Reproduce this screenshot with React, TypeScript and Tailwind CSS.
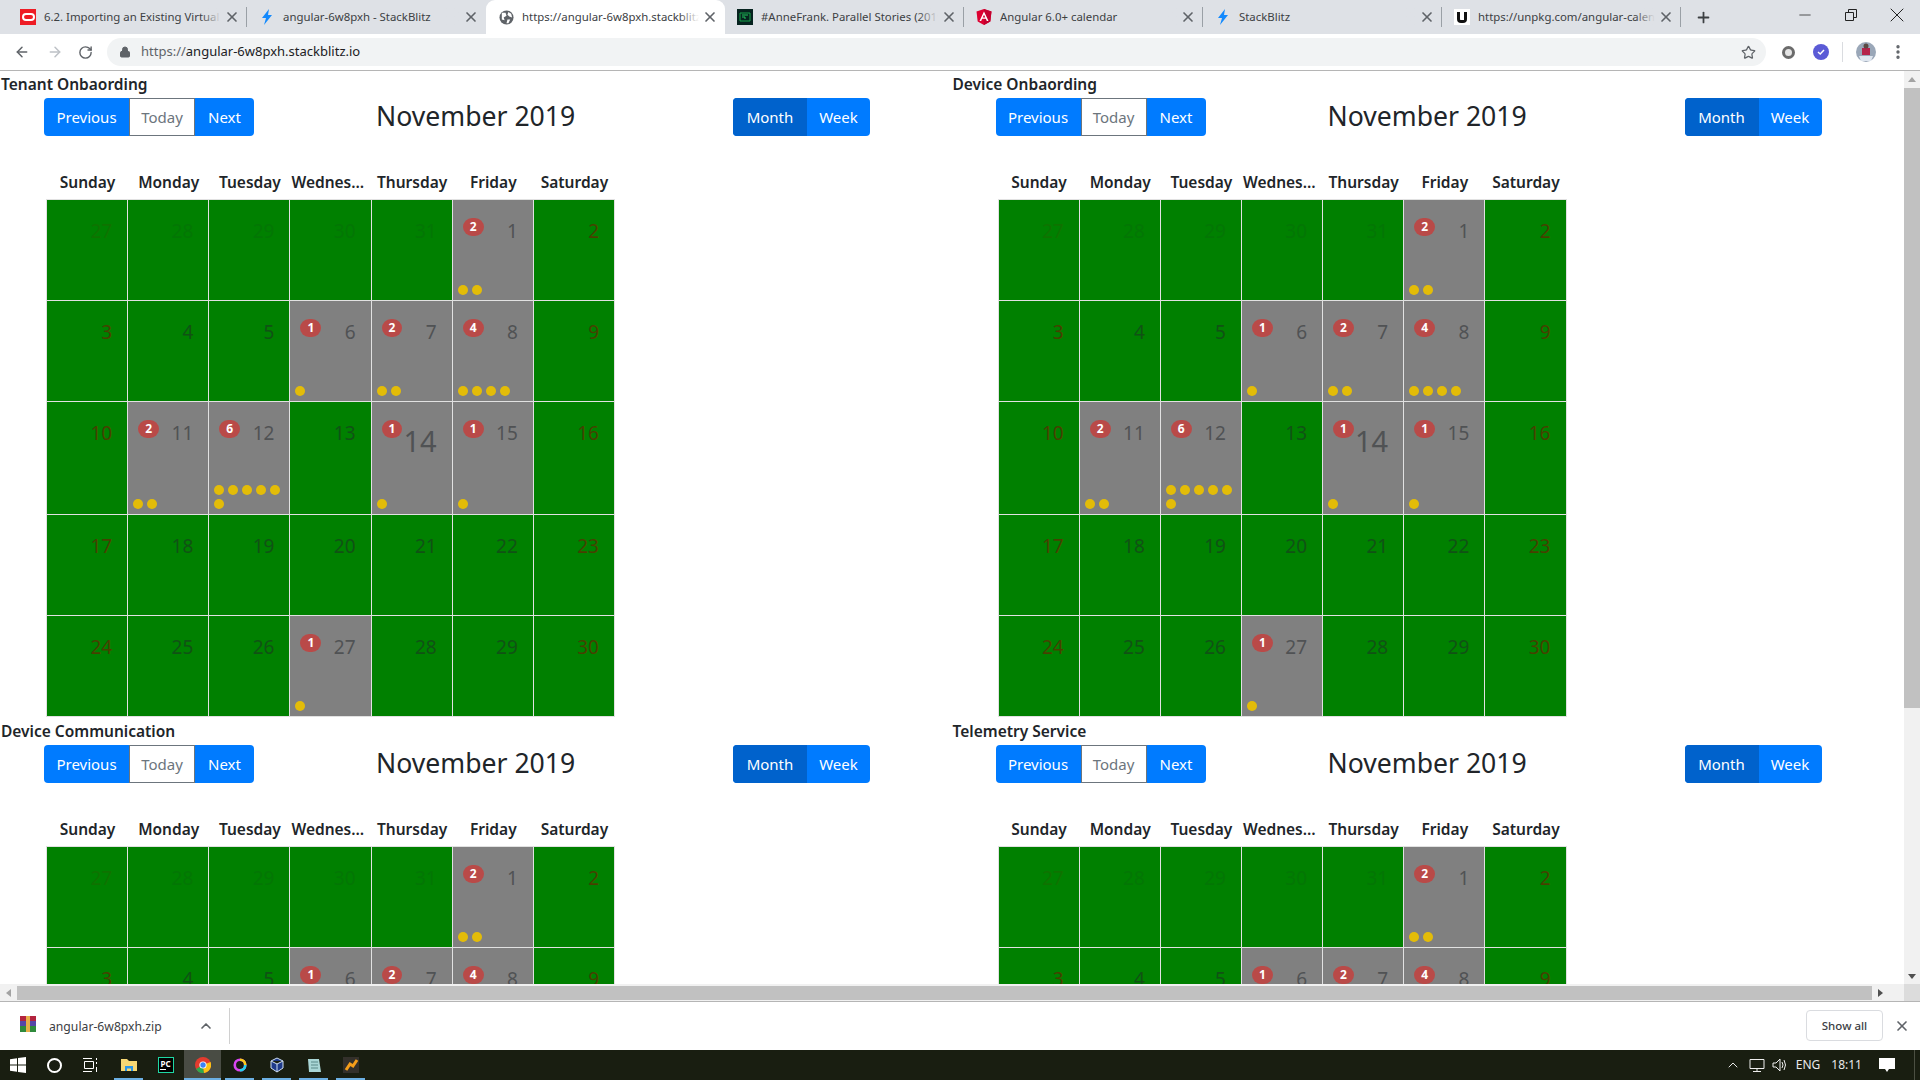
import { ArrowLeft, ArrowRight, ChevronUp, EllipsisVertical, Lock, Minus, Plus, RotateCw, Star, X } from "lucide-react";

const uiFont = "font-['Noto_Sans','Open_Sans',sans-serif]";

// 이벤트 개수 (날짜별)
const events: Record<number, number> = { 1: 2, 6: 1, 7: 2, 8: 4, 11: 2, 12: 6, 14: 1, 15: 1, 27: 1 };
const days = [27, 28, 29, 30, 31, ...Array.from({ length: 30 }, (_, i) => i + 1)];
const weekdays = ["Sunday", "Monday", "Tuesday", "Wednesday", "Thursday", "Friday", "Saturday"];

function Bolt() {
  return (
    <svg viewBox="0 0 16 16" className="size-4">
      <path d="M10 0 L3 9 H7 L5 16 L13 6 H9 Z" fill="#1389fd" />
    </svg>
  );
}

function OracleIcon() {
  return (
    <div className="flex size-4 items-center justify-center bg-[#ee1c25]">
      <div className="h-[8px] w-[13px] rounded-full border-2 border-white" />
    </div>
  );
}

function GlobeIcon() {
  return (
    <svg viewBox="0 0 16 16" className="size-[15px]">
      <circle cx="8" cy="8" r="7.5" fill="#5f6368" />
      <path d="M3 3 L7 3 L8 6 L5 8 L6 11 L3 10 Z M10 2 L13 4 L14 8 L11 7 L9 5 Z M9 10 L12 10 L10 14 L8 14 Z" fill="#fff" />
    </svg>
  );
}

function AnneIcon() {
  return (
    <div className="flex size-4 items-center justify-center bg-[#06231f]">
      <svg viewBox="0 0 16 16" className="size-4">
        <path d="M3 4 H13 V12 H3 Z" fill="none" stroke="#16a34a" strokeWidth="1" />
        <path d="M5 6 H11 M5 8 H8 V10" fill="none" stroke="#22c55e" strokeWidth="1" />
      </svg>
    </div>
  );
}

function AngularIcon() {
  return (
    <svg viewBox="0 0 16 16" className="size-4">
      <path d="M8 0 L15.5 2.6 L14.3 12.6 L8 16 L1.7 12.6 L0.5 2.6 Z" fill="#dd0031" />
      <path d="M8 0 L15.5 2.6 L14.3 12.6 L8 16 Z" fill="#c3002f" />
      <path d="M8 2.5 L3.5 12 H5.2 L6.1 9.8 H9.9 L10.8 12 H12.5 Z M8 5.8 L9.3 8.5 H6.7 Z" fill="#fff" />
    </svg>
  );
}

function UnpkgIcon() {
  return (
    <div className="flex size-4 items-center justify-center bg-white">
      <div className="h-[11px] w-[10px] rounded-b-[4px] border-x-[3px] border-b-[3px] border-[#111]" />
    </div>
  );
}

function Tab({ icon, title, active, noDivider }: { icon: React.ReactNode; title: string; active?: boolean; noDivider?: boolean }) {
  const fade = active ? "from-white" : "from-[#dee1e6]";
  return (
    <div className={`relative flex h-[34px] w-[239px] shrink-0 items-center pl-3 pr-[7px] ${active ? "rounded-t-[9px] bg-white" : ""}`}>
      <div className="flex w-4 shrink-0 items-center justify-center">{icon}</div>
      <div className="relative ml-2 min-w-0 flex-1 overflow-hidden whitespace-nowrap text-[11.4px] text-[#3c4043]">
        {title}
        <div className={`absolute inset-y-0 right-0 w-5 bg-linear-to-l ${fade} to-transparent`} />
      </div>
      <X className="ml-[3px] size-[16px] shrink-0 text-[#5f6368]" strokeWidth={2.5} />
      {!noDivider && <div className="absolute right-0 h-5 w-px bg-[#9aa0a6]" />}
    </div>
  );
}

function TabBar() {
  return (
    <div className="flex h-[34px] items-center bg-[#dee1e6] pl-2">
      <Tab icon={<OracleIcon />} title="6.2. Importing an Existing Virtual Machine" />
      <Tab icon={<Bolt />} title="angular-6w8pxh - StackBlitz" noDivider />
      <Tab icon={<GlobeIcon />} title="https://angular-6w8pxh.stackblitz.io" active noDivider />
      <Tab icon={<AnneIcon />} title="#AnneFrank. Parallel Stories (2019)" />
      <Tab icon={<AngularIcon />} title="Angular 6.0+ calendar" />
      <Tab icon={<Bolt />} title="StackBlitz" />
      <Tab icon={<UnpkgIcon />} title="https://unpkg.com/angular-calendar" />
      <Plus className="ml-[14px] size-[17px] text-[#3c4043]" strokeWidth={2.5} />
      <div className="ml-auto flex items-center self-start pt-[3px] text-[#222]">
        <Minus className="mr-[31px] size-[18px]" strokeWidth={1} />
        <svg viewBox="0 0 12 12" className="mr-[28px] size-[12px]" fill="none" stroke="currentColor">
          <path d="M0.5 3.5 H8.5 V11.5 H0.5 Z M3.5 3.5 V0.5 H11.5 V8.5 H8.5" />
        </svg>
        <X className="mr-[11px] size-[24px]" strokeWidth={1} />
      </div>
    </div>
  );
}

function Toolbar() {
  return (
    <div className="flex h-[37px] items-center border-b border-[#b5b5b5] bg-white">
      <ArrowLeft className="ml-[14px] size-[16px] text-[#5f6368]" strokeWidth={2.25} />
      <ArrowRight className="ml-[17px] size-[16px] text-[#bdc1c6]" strokeWidth={2.25} />
      <RotateCw className="ml-[15px] size-[15px] text-[#5f6368]" strokeWidth={2.25} />
      <div className="ml-[14px] flex h-[28px] w-[1659px] items-center rounded-full bg-[#f1f3f4] pl-3 pr-[10px]">
        <Lock className="size-[12px] fill-[#5f6368] text-[#5f6368]" />
        <div className="ml-[10px] text-[13px]">
          <span className="text-[#5f6368]">https://</span>
          <span className="text-[#202124]">angular-6w8pxh.stackblitz.io</span>
        </div>
        <Star className="ml-auto size-[15px] text-[#5f6368]" strokeWidth={2} />
      </div>
      <div className="ml-[16px] size-[13px] rounded-full border-[3px] border-[#6b6b6b] bg-[#e5e5e5]" />
      <div className="ml-[18px] flex size-[16px] items-center justify-center rounded-full bg-[#5b5bd6]">
        <svg viewBox="0 0 10 10" className="size-[10px]" fill="none" stroke="#fff" strokeWidth="1.5">
          <path d="M2 5 L4.2 7 L8 3" />
        </svg>
      </div>
      <div className="ml-[13px] h-5 w-px bg-[#dadce0]" />
      <svg viewBox="0 0 20 20" className="ml-[13px] size-[20px]">
        <circle cx="10" cy="10" r="10" fill="#9aa7b8" />
        <path d="M6 6 H14 V13 H6 Z" fill="#b5234a" />
        <path d="M3 14 H17 L15 19 H5 Z" fill="#dfe6ef" />
        <circle cx="10" cy="4" r="2.5" fill="#5b4a42" />
      </svg>
      <EllipsisVertical className="ml-[13px] size-[18px] text-[#5f6368]" strokeWidth={2.5} />
    </div>
  );
}

function DayCell({ day, index }: { day: number; index: number }) {
  const count = index >= 5 ? events[day] ?? 0 : 0;
  const outMonth = index < 5;
  const weekend = index % 7 === 0 || index % 7 === 6;
  const isToday = day === 14;
  return (
    <div className={`flex min-h-[101px] flex-col border-r border-b border-[#e1e1e1] ${count ? "bg-[#808080]" : "bg-[#008000]"}`}>
      <div className="min-h-[81px] flex-1">
        <span
          className={`float-right mt-[17px] mr-[15px] leading-[1.5] ${isToday ? "text-[29px]" : "text-[19px]"} ${weekend ? "text-[#8b0000]" : "text-[#212529]"} ${outMonth ? "opacity-10" : "opacity-50"}`}
        >
          {day}
        </span>
        {count > 0 && (
          <span className="mt-[18px] ml-[10px] inline-block rounded-[10px] bg-[#b94a48] px-[7px] py-[3px] text-[12px] leading-none font-bold text-white">
            {count}
          </span>
        )}
      </div>
      {count > 0 && (
        <div className="flex flex-wrap pb-[3px] pl-[3px]">
          {Array.from({ length: count }, (_, i) => (
            <div key={i} className="m-[2px] size-[10px] rounded-full bg-[#e3bc08]" />
          ))}
        </div>
      )}
    </div>
  );
}

function Calendar({ title }: { title: string }) {
  return (
    <section className="h-[647px] pt-px">
      <h2 className="pl-px text-[15.5px] leading-6 font-semibold text-[#212529]">{title}</h2>
      <div className="mt-[2px] ml-[44px] flex w-[826px] items-center text-[15px] text-white">
        <div className="flex h-[38px] w-[210px] overflow-hidden rounded-[4px] bg-[#007bff] pt-px">
          <div className="flex w-[85px] items-center justify-center">Previous</div>
          <div className="-mt-px flex w-[66px] items-center justify-center border border-[#6c757d] bg-white pt-px text-[#6c757d]">Today</div>
          <div className="flex w-[59px] items-center justify-center">Next</div>
        </div>
        <h3 className="ml-[122px] -translate-y-px text-[26.6px] leading-[34px] text-[#212529]">November 2019</h3>
        <div className="ml-auto flex h-[38px] w-[137px] overflow-hidden rounded-[4px] bg-[#007bff]">
          <div className="flex w-[74px] items-center justify-center bg-[#0062cc] pt-px">Month</div>
          <div className="flex flex-1 items-center justify-center pt-px">Week</div>
        </div>
      </div>
      <div className="mt-[34px] ml-[46px] w-[569px]">
        <div className="grid grid-cols-7 pb-[5px] pl-px text-[15.5px] leading-6 font-semibold text-[#212529]">
          {weekdays.map((w) => (
            <div key={w} className="truncate px-px text-center">
              {w}
            </div>
          ))}
        </div>
        <div className="grid grid-cols-7 border-t border-l border-[#e1e1e1]">
          {days.map((d, i) => (
            <DayCell key={i} day={d} index={i} />
          ))}
        </div>
      </div>
    </section>
  );
}

function Triangle({ dir }: { dir: "up" | "down" | "left" | "right" }) {
  const d = { up: "M5 2 L9 7 H1 Z", down: "M1 3 H9 L5 8 Z", left: "M7 1 V9 L2 5 Z", right: "M3 1 V9 L8 5 Z" }[dir];
  return (
    <svg viewBox="0 0 10 10" className="size-[10px]">
      <path d={d} fill={dir === "up" || dir === "left" ? "#a3a3a3" : "#505050"} />
    </svg>
  );
}

function DownloadBar() {
  return (
    <div className="flex h-[49px] items-center border-t border-[#b5b5b5] bg-white">
      <svg viewBox="0 0 16 16" className="mb-[4px] ml-5 size-[16px]">
        <path d="M0 0 H16 V5 H0 Z" fill="#b3243e" />
        <path d="M0 5 H16 V10 H0 Z" fill="#5546a8" />
        <path d="M0 10 H16 V16 H0 Z" fill="#2f8a3c" />
        <path d="M6 0 H10 V16 H6 Z" fill="#e8b04a" />
      </svg>
      <span className="mt-[3px] ml-[13px] text-[12.2px] text-[#3c4043]">angular-6w8pxh.zip</span>
      <ChevronUp className="ml-[36px] size-[16px] text-[#5f6368]" strokeWidth={2.5} />
      <div className="ml-[15px] h-9 w-px bg-[#d0d0d0]" />
      <div className="mb-px ml-auto flex h-[31px] w-[77px] items-center justify-center rounded-[4px] border border-[#dadce0] text-[11.5px] font-medium text-[#3c4043]">
        Show all
      </div>
      <X className="mr-[10px] ml-[11px] size-[16px] text-[#5f6368]" strokeWidth={2.5} />
    </div>
  );
}

function TaskSlot({ children, on, hover, narrow }: { children: React.ReactNode; on?: boolean; hover?: boolean; narrow?: boolean }) {
  return (
    <div className={`relative flex h-[30px] shrink-0 items-center justify-center ${narrow ? "w-9" : "w-[37px]"} ${hover ? "bg-[#494c44]" : ""}`}>
      {children}
      {on && <div className={`absolute bottom-0 h-[2px] bg-[#6cb0e4] ${hover ? "inset-x-0" : "inset-x-[4px]"}`} />}
    </div>
  );
}

function Taskbar() {
  return (
    <div className="flex h-[30px] items-center bg-[#191e11] text-white">
      <TaskSlot narrow>
        <svg viewBox="0 0 16 16" className="size-4" fill="#fff">
          <path d="M0 2.2 L7 1.2 V7.5 H0 Z M8 1 L16 0 V7.5 H8 Z M0 8.5 H7 V14.8 L0 13.8 Z M8 8.5 H16 V16 L8 15 Z" />
        </svg>
      </TaskSlot>
      <TaskSlot narrow>
        <div className="size-[15px] rounded-full border-2 border-white" />
      </TaskSlot>
      <TaskSlot narrow>
        <svg viewBox="0 0 16 16" className="size-4" fill="none" stroke="#fff">
          <path d="M1 1.5 H10 M1 14.5 H10 M2.5 4.5 H11.5 V11.5 H2.5 Z M14.5 1 V3 M14.5 5 V7 M14.5 10 V15" />
        </svg>
      </TaskSlot>
      <div className="ml-[2px] flex">
        <TaskSlot on>
          <svg viewBox="0 0 16 16" className="size-4">
            <path d="M0 2 H6 L8 4 H16 V14 H0 Z" fill="#f7d774" />
            <path d="M4 9 H12 V14 H10 V11.5 H6 V14 H4 Z" fill="#2a96e8" />
          </svg>
        </TaskSlot>
        <TaskSlot>
          <div className="flex size-4 flex-col items-center justify-center border border-[#1fd8a4] bg-black text-[8px] leading-none font-bold">
            PC
            <div className="mt-px mr-[6px] h-px w-[6px] bg-white" />
          </div>
        </TaskSlot>
        <TaskSlot on hover>
          <svg viewBox="0 0 16 16" className="size-4">
            <circle cx="8" cy="8" r="8" fill="#e33b2e" />
            <path d="M8 8 L1 12 A8 8 0 0 0 9 16 Z" fill="#2da94f" />
            <path d="M8 8 L15.5 5 A8 8 0 0 1 9 16 Z" fill="#fbc116" />
            <circle cx="8" cy="8" r="3.6" fill="#fff" />
            <circle cx="8" cy="8" r="2.7" fill="#3b82f6" />
          </svg>
        </TaskSlot>
        <TaskSlot on>
          <svg viewBox="0 0 16 16" className="size-[14px]" fill="none" strokeWidth="3">
            <circle cx="8" cy="8" r="6" stroke="#d946ef" />
            <path d="M8 2 A6 6 0 0 1 14 8" stroke="#facc15" />
            <path d="M14 8 A6 6 0 0 1 8 14" stroke="#22d3ee" />
          </svg>
        </TaskSlot>
        <TaskSlot on>
          <svg viewBox="0 0 16 16" className="size-4" fill="#1e3a8a" stroke="#cfe0f5">
            <path d="M8 1 L14 4 V11 L8 15 L2 11 V4 Z M2 4 L8 7 L14 4 M8 7 V15" />
          </svg>
        </TaskSlot>
        <TaskSlot on>
          <svg viewBox="0 0 16 16" className="size-4">
            <path d="M2 2 H13 L15 15 H3 Z" fill="#a9d6d6" />
            <path d="M5 5 H12 M5 8 H12 M5 11 H12" stroke="#5b8a8a" />
          </svg>
        </TaskSlot>
        <TaskSlot on>
          <svg viewBox="0 0 16 16" className="size-4">
            <path d="M0 0 H16 V16 H0 Z" fill="#33302b" />
            <path d="M3 13 L7 7 L10 9 L14 3" fill="none" stroke="#f59e1a" strokeWidth="3" />
          </svg>
        </TaskSlot>
      </div>
      <div className={`ml-auto flex items-center pr-[5px] text-[12px] text-[#e8e8e8] ${uiFont}`}>
        <ChevronUp className="size-[16px]" strokeWidth={1.5} />
        <svg viewBox="0 0 16 16" className="ml-[8px] size-[16px]" fill="none" stroke="#eee">
          <path d="M1 2.5 H15 V11.5 H1 Z M8 11.5 V14.5 M4 14.5 H12" />
        </svg>
        <svg viewBox="0 0 16 16" className="ml-[7px] size-[16px]" fill="none" stroke="#eee">
          <path d="M1 6 H4 L8 2 V14 L4 10 H1 Z M10 5 Q12 8 10 11 M12 3 Q15 8 12 13" />
        </svg>
        <span className="ml-[8px]">ENG</span>
        <span className="ml-[11px]">18:11</span>
        <svg viewBox="0 0 16 16" className="ml-[17px] size-[16px]" fill="#fff">
          <path d="M0 1 H16 V12 H10 L8 15 L6 12 H0 Z" />
        </svg>
        <div className="ml-[19px] h-[30px] w-px bg-[#4b4f42]" />
      </div>
    </div>
  );
}

export default function App() {
  return (
    <div className={`flex h-screen w-screen flex-col overflow-hidden bg-white ${uiFont}`}>
      <TabBar />
      <Toolbar />
      <div className="flex h-[913px] shrink-0">
        <main className="min-w-0 flex-1 overflow-hidden">
          <div className="grid w-[1904px] grid-cols-[951.5px_951.5px]">
            <Calendar title="Tenant Onbaording" />
            <Calendar title="Device Onbaording" />
            <Calendar title="Device Communication" />
            <Calendar title="Telemetry Service" />
          </div>
        </main>
        <div className="flex w-4 shrink-0 flex-col items-center bg-[#f1f1f1]">
          <div className="flex h-[17px] items-center justify-center">
            <Triangle dir="up" />
          </div>
          <div className="h-[620px] w-full bg-[#c1c1c1]" />
          <div className="mt-auto flex h-[17px] items-center justify-center">
            <Triangle dir="down" />
          </div>
        </div>
      </div>
      <div className="flex h-[17px] shrink-0 items-center bg-[#f1f1f1]">
        <div className="flex w-[17px] justify-center">
          <Triangle dir="left" />
        </div>
        <div className="h-[14px] w-[1855px] bg-[#c1c1c1]" />
        <div className="flex flex-1 justify-center pr-[16px]">
          <Triangle dir="right" />
        </div>
        <div className="h-full w-4 bg-[#dcdcdc]" />
      </div>
      <DownloadBar />
      <Taskbar />
    </div>
  );
}
